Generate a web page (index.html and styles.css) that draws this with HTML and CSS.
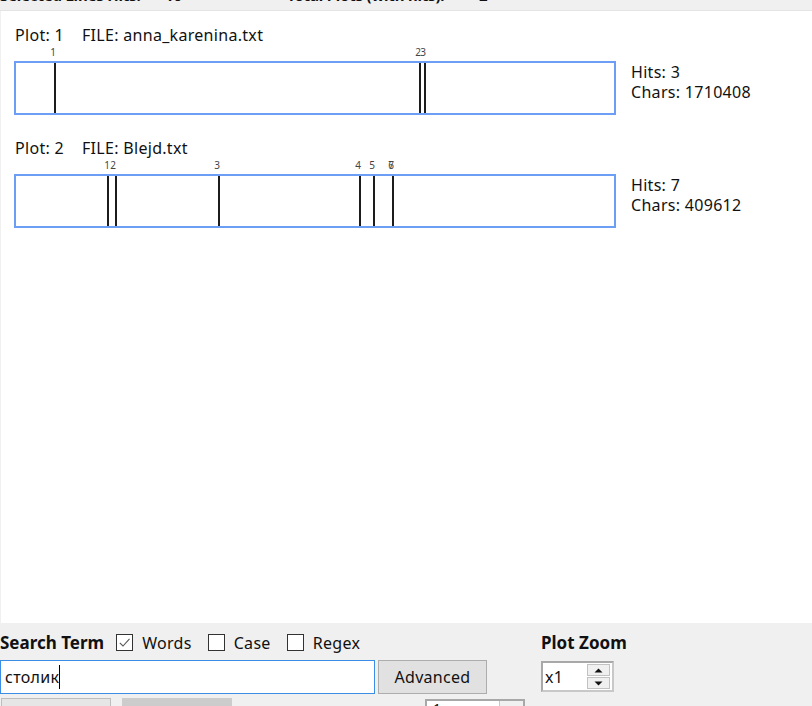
FILE: index.html
```html
<!DOCTYPE html>
<html>
<head>
<meta charset="utf-8">
<link rel="stylesheet" href="styles.css">
</head>
<body>
<div class="topbar">
  <span class="top-label first">Selected Lines Hits:</span>
  <span class="top-val first-val">10</span>
  <span class="top-label second">Total Plots (with hits):</span>
  <span class="top-val">2</span>
</div>
<div class="panel">
  <section class="plot">
    <div class="plot-title"><span class="plot-num">Plot: 1</span><span>FILE: anna_karenina.txt</span></div>
    <div class="plot-row">
      <div class="track">
        <div class="ticks">
          <span class="tick" style="left:39px">1</span>
          <span class="tick" style="left:404px">2</span>
          <span class="tick" style="left:409px">3</span>
        </div>
        <div class="box">
          <span class="hit" style="left:38px"></span>
          <span class="hit" style="left:403px"></span>
          <span class="hit" style="left:408px"></span>
        </div>
      </div>
      <div class="stats"><div>Hits: 3</div><div>Chars: 1710408</div></div>
    </div>
  </section>
  <section class="plot second">
    <div class="plot-title"><span class="plot-num">Plot: 2</span><span>FILE: Blejd.txt</span></div>
    <div class="plot-row">
      <div class="track">
        <div class="ticks">
          <span class="tick" style="left:93px">1</span>
          <span class="tick" style="left:99px">2</span>
          <span class="tick" style="left:203px">3</span>
          <span class="tick" style="left:344px">4</span>
          <span class="tick" style="left:358px">5</span>
          <span class="tick" style="left:377px">6</span>
          <span class="tick" style="left:377px">7</span>
        </div>
        <div class="box">
          <span class="hit" style="left:91px"></span>
          <span class="hit" style="left:99px"></span>
          <span class="hit" style="left:202px"></span>
          <span class="hit" style="left:343px"></span>
          <span class="hit" style="left:357px"></span>
          <span class="hit" style="left:376px"></span>
        </div>
      </div>
      <div class="stats"><div>Hits: 7</div><div>Chars: 409612</div></div>
    </div>
  </section>
</div>
<div class="controls">
  <div class="row row1">
    <div class="left">
      <span class="bold">Search Term</span>
      <label class="check"><span class="cb"><svg width="13" height="13" viewBox="0 0 13 13"><path d="M1.8 6.8 L5 10 L11.5 2.8" fill="none" stroke="#555" stroke-width="1.1"/></svg></span>Words</label>
      <label class="check"><span class="cb"></span>Case</label>
      <label class="check"><span class="cb"></span>Regex</label>
    </div>
    <span class="bold">Plot Zoom</span>
  </div>
  <div class="row row2">
    <div class="left">
      <div class="input"><span>столик</span><span class="caret"></span></div>
      <div class="btn">Advanced</div>
    </div>
    <div class="spin">
      <span class="spin-val">x1</span>
      <div class="spin-btns">
        <span class="sb"><svg width="9" height="5" viewBox="0 0 9 5"><path d="M0.5 4.5 L4.5 0.5 L8.5 4.5Z" fill="#111"/></svg></span>
        <span class="sb"><svg width="9" height="5" viewBox="0 0 9 5"><path d="M0.5 0.5 L4.5 4.5 L8.5 0.5Z" fill="#111"/></svg></span>
      </div>
    </div>
  </div>
  <div class="row row3">
    <div class="btn small"></div>
    <div class="btn small disabled"></div>
    <div class="spin2"><span class="spin2-val">1</span><span class="spin2-btn"></span></div>
  </div>
</div>
</body>
</html>
```
FILE: styles.css
```css
* { box-sizing: border-box; }
html, body { margin: 0; padding: 0; }
body {
  width: 812px;
  height: 706px;
  overflow: hidden;
  background: #f0f0f0;
  font-family: "Noto Sans", "Open Sans", sans-serif;
  font-size: 16px;
  letter-spacing: 0.3px;
  color: #111;
}
.topbar {
  height: 11px;
  overflow: hidden;
  display: flex;
  align-items: flex-start;
  font-weight: bold;
  font-size: 15px;
  line-height: 16px;
  letter-spacing: -0.2px;
  border-bottom: 1px solid #e4e4e4;
}
.topbar span { margin-top: -13px; white-space: nowrap; }
.top-label.first { width: 165px; }
.top-val.first-val { width: 122px; }
.top-label.second { width: 192px; }
.panel {
  background: #fff;
  margin-left: 1px;
  height: 612px;
  padding-top: 14px;
}
.plot { padding-left: 13px; }
.plot.second { margin-top: 23px; }
.plot-title {
  height: 20px;
  line-height: 20px;
  display: flex;
  padding-left: 1px;
}
.plot-num { width: 67px; }
.plot-row { display: flex; }
.track { width: 602px; }
.ticks {
  position: relative;
  height: 16px;
}
.tick {
  position: absolute;
  top: 2px;
  transform: translateX(-50%);
  font-size: 10px;
  line-height: 10px;
  letter-spacing: 0;
  color: #444;
}
.box {
  position: relative;
  height: 54px;
  border: 2px solid #6d9ef6;
}
.hit {
  position: absolute;
  top: 0;
  bottom: 0;
  width: 2px;
  background: #1c1c1c;
}
.stats {
  padding-left: 15px;
  padding-top: 17px;
  line-height: 20px;
}
.controls { padding-top: 8px; }
.row { display: flex; align-items: center; }
.row1 { height: 23px; }
.row1 .left { width: 541px; display: flex; align-items: center; }
.bold { font-weight: bold; font-size: 17px; letter-spacing: 0; }
.check { display: flex; align-items: center; margin-left: 16px; }
.check:first-of-type { margin-left: 12px; }
.cb {
  width: 17px;
  height: 17px;
  border: 1px solid #333;
  background: #fff;
  margin-right: 9px;
  display: flex;
  align-items: center;
  justify-content: center;
}
.row2 { margin-top: 6px; height: 34px; align-items: flex-start; }
.row2 .left { width: 541px; display: flex; }
.input {
  width: 375px;
  height: 34px;
  border: 1px solid #3b8de6;
  background: #fff;
  display: flex;
  align-items: center;
  padding-left: 4px;
}
.caret { width: 1px; height: 24px; background: #000; }
.btn {
  width: 109px;
  height: 34px;
  margin-left: 3px;
  border: 1px solid #adadad;
  background: #e1e1e1;
  display: flex;
  align-items: center;
  justify-content: center;
}
.spin {
  width: 73px;
  height: 31px;
  margin-top: 1px;
  border: 2px solid #a8a8a8;
  border-right-color: #c8c8c8;
  border-bottom-color: #c8c8c8;
  background: #fff;
  display: flex;
  align-items: center;
  padding-left: 2px;
}
.spin-val { flex: 1; }
.spin-btns { display: flex; flex-direction: column; gap: 1px; margin-right: 2px; }
.sb {
  width: 23px;
  height: 12px;
  background: #f0f0f0;
  border: 1px solid #c2c2c2;
  display: flex;
  align-items: center;
  justify-content: center;
}
.row3 { margin-top: 4px; height: 20px; align-items: flex-start; }
.btn.small { width: 110px; height: 20px; margin-left: 1px; border-color: #bdbdbd; background: #e6e6e6; }
.btn.small.disabled { margin-left: 11px; background: #cccccc; border-color: #cccccc; }
.spin2 {
  margin-left: 193px;
  margin-top: 1px;
  width: 100px;
  height: 20px;
  border: 2px solid #a8a8a8;
  background: #fff;
  display: flex;
}
.spin2-val { flex: 1; font-size: 14px; line-height: 14px; padding-left: 6px; padding-top: 1px; }
.spin2-btn { width: 24px; border-left: 1px solid #c8c8c8; background: #f0f0f0; }
```
